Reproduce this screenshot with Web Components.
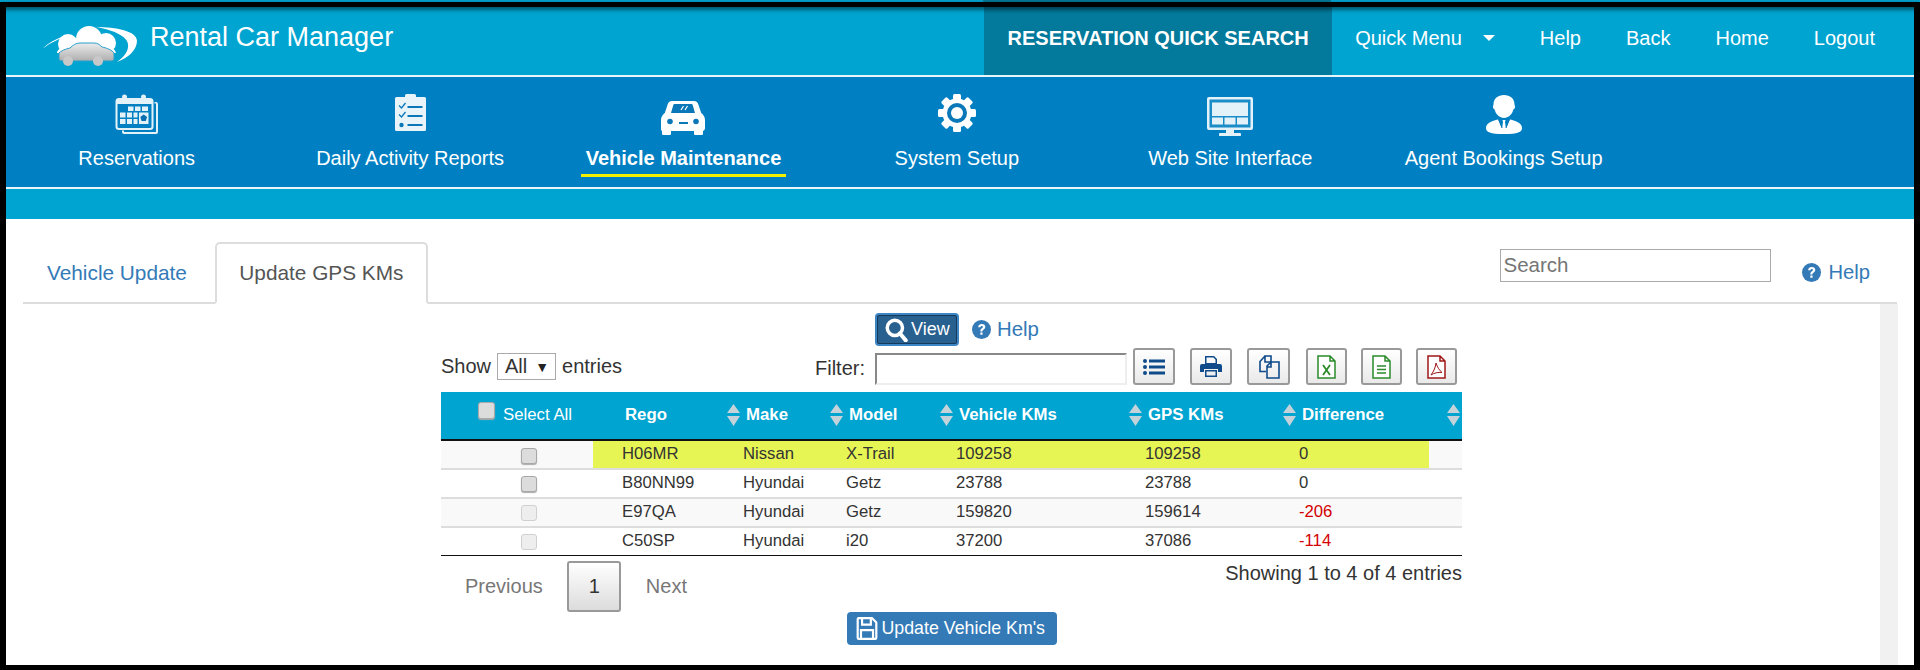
<!doctype html>
<html>
<head>
<meta charset="utf-8">
<title>Rental Car Manager</title>
<style>
  html, body { margin: 0; padding: 0; background: #fff; }
  body { font-family: "Liberation Sans", Arial, sans-serif; }
</style>
</head>
<body>
<rcm-page>
  <rcm-topbar></rcm-topbar>
  <rcm-nav>
    <rcm-nav-item icon="calendar">Reservations</rcm-nav-item>
    <rcm-nav-item icon="clipboard">Daily Activity Reports</rcm-nav-item>
    <rcm-nav-item icon="car" active>Vehicle Maintenance</rcm-nav-item>
    <rcm-nav-item icon="gear">System Setup</rcm-nav-item>
    <rcm-nav-item icon="monitor">Web Site Interface</rcm-nav-item>
    <rcm-nav-item icon="agent">Agent Bookings Setup</rcm-nav-item>
  </rcm-nav>
  <rcm-tabs></rcm-tabs>
  <rcm-gps-panel></rcm-gps-panel>
</rcm-page>

<script>
// icon artwork, keyed by name
const icons = {
  calendar: `<svg width="43" height="40" viewBox="0 0 43 40"><path d="M39.500 8H41a2 2 0 0 1 2 2v28a2 2 0 0 1-2 2H9a2 2 0 0 1-2-2v-1.500h2V38h32V9.500h-1.500z" fill="#e3f1f9"/><rect x="1.500" y="5" width="36" height="30" rx="2.500" fill="none" stroke="#e3f1f9" stroke-width="2"/><rect x="1.500" y="5" width="36" height="5" fill="#e3f1f9"/><circle cx="9.500" cy="3" r="2.500" fill="#e3f1f9"/><circle cx="28.500" cy="3" r="2.500" fill="#e3f1f9"/><g fill="#e3f1f9"><rect x="13" y="12.500" width="5.500" height="4.500"/><rect x="20" y="12.500" width="5.500" height="4.500"/><rect x="27" y="12.500" width="6" height="4.500"/><rect x="5" y="18.500" width="5.500" height="5"/><rect x="12" y="18.500" width="5" height="5"/><rect x="18.500" y="18.500" width="4" height="5"/><rect x="5" y="25" width="5.500" height="5"/><rect x="12" y="25" width="5" height="5"/><rect x="18.500" y="25" width="4" height="5"/><rect x="24" y="18.500" width="9.500" height="11.500"/></g><path d="M28.700 20.500l3.400 2.500-1.300 4h-4.200l-1.300-4z" fill="#0a6fb0"/></svg>`,
  clipboard: `<svg width="31" height="37" viewBox="0 0 31 37"><path d="M1.500 3H10V1.500A1.500 1.500 0 0 1 11.500 0h8A1.500 1.500 0 0 1 21 1.500V3h8.500A1.500 1.500 0 0 1 31 4.500v31a1.500 1.500 0 0 1-1.500 1.500h-28A1.500 1.500 0 0 1 0 35.500v-31A1.500 1.500 0 0 1 1.500 3z" fill="#e8f4fa"/><g fill="none" stroke="#0a78b8"><path d="M4 11.500l2.500 2.500 4-5M4 20.500l2.500 2.500 4-5" stroke-width="1.300"/><path d="M12.500 13h15M12.500 22h15M12.500 31h15" stroke-width="2"/></g><circle cx="6.500" cy="31" r="2.200" fill="#0a78b8"/></svg>`,
  car: `<svg style="margin-top:7px" width="44" height="34" viewBox="0 0 44 34"><path d="M11 0h22c2 0 3.500 1 4.200 3l3 9c2 1.500 3.800 4 3.800 7v8c0 1.500-1 2.500-2 3v2.500c0 1-.5 1.500-1.500 1.500h-6c-1 0-1.500-.5-1.500-1.500V30H10v2.500c0 1-.5 1.500-1.500 1.500h-6C1.500 34 1 33.500 1 32.500V30c-1-.5-1-1.500-1-3v-8c0-3 1.800-5.500 3.800-7l3-9C7.500 1 9 0 11 0z" fill="#fff"/><path d="M13.500 3h17c.6 0 1 .3 1.200.9L34 12H10l2.300-8.100c.2-.6.600-.9 1.200-.9z" fill="#0a78b8"/><path d="M20 9l2.500-4M24 9l2.500-4" stroke="#fff" stroke-width="1.200"/><circle cx="9" cy="20.500" r="2.800" fill="#0a78b8"/><circle cx="35" cy="20.500" r="2.800" fill="#0a78b8"/><rect x="18" y="21" width="9" height="2" fill="#0a78b8"/></svg>`,
  gear: `<svg width="38" height="38" viewBox="0 0 38 38"><g fill="#fff"><circle cx="19" cy="19" r="14.500"/><rect x="15" y="0" width="8" height="38" rx="1.500"/><rect x="15" y="0" width="8" height="38" rx="1.500" transform="rotate(45 19 19)"/><rect x="15" y="0" width="8" height="38" rx="1.500" transform="rotate(90 19 19)"/><rect x="15" y="0" width="8" height="38" rx="1.500" transform="rotate(135 19 19)"/></g><circle cx="19" cy="19" r="10" fill="#0a78b8"/><circle cx="19" cy="19" r="6" fill="#fff"/></svg>`,
  monitor: `<svg style="margin-top:3px" width="46" height="39" viewBox="0 0 46 39"><rect x="0" y="0" width="46" height="33" rx="2" fill="#e3f1f9"/><rect x="2.500" y="2.500" width="41" height="28" fill="#1a8cc8"/><rect x="5" y="5.500" width="36" height="13.500" fill="#e3f1f9"/><g fill="#e3f1f9"><rect x="5" y="20.500" width="11" height="7"/><rect x="17.500" y="20.500" width="11" height="7"/><rect x="30" y="20.500" width="11" height="7"/></g><path d="M19 33h8v3h6c.8 0 1 .5 1 1.500s-.2 1.500-1 1.500H13c-.8 0-1-.5-1-1.500s.2-1.500 1-1.500h6z" fill="#e3f1f9"/></svg>`,
  agent: `<svg style="margin-top:1px" width="36" height="39" viewBox="0 0 36 39"><path d="M18 0c6 0 10.500 3.500 10.500 9.500 0 1 .7 1 .5 2.800-.2 1.500-1 2-1.700 2.300C26.300 19.500 22.500 23 18 23s-8.300-3.500-9.300-8.400c-.7-.3-1.500-.8-1.700-2.300-.2-1.800.5-1.800.5-2.800C7.500 3.500 12 0 18 0z" fill="#fff"/><path d="M12 24.500C6 26 0 28 0 33c0 4 4 6 18 6s18-2 18-6c0-5-6-7-12-8.500L20 33h-4z" fill="#fff"/><path d="M16.500 25h3l-.5 2 1 7-2 2-2-2 1-7z" fill="#fff"/><path d="M13 25l3 8M23 25l-3 8" stroke="#0a78b8" stroke-width="1"/></svg>`,
  help: `<svg width="100%" height="100%" viewBox="0 0 18 18"><circle cx="9" cy="9" r="9" fill="#337ab7"/><path d="M5.800 6.800C6 4.800 7.300 3.700 9.300 3.700c2 0 3.300 1.200 3.300 2.800 0 1.300-.7 2-1.700 2.700-.8.600-1 .9-1 1.800H7.900c0-1.500.3-2.100 1.300-2.900.7-.6 1.100-.9 1.100-1.500 0-.6-.4-1-1-1-.7 0-1.100.4-1.200 1.200z" fill="#fff"/><rect x="7.900" y="11.800" width="2.100" height="2.200" fill="#fff"/></svg>`,
  search: `<svg width="23" height="24" viewBox="0 0 21 22"><circle cx="9" cy="9" r="7" fill="none" stroke="#fff" stroke-width="3.200"/><path d="M13.500 14l5.500 6.500" stroke="#fff" stroke-width="3.600" stroke-linecap="round"/></svg>`,
  list: `<svg width="22" height="18" viewBox="0 0 22 18" fill="#0f4a8a"><circle cx="2" cy="3" r="2"/><circle cx="2" cy="9" r="2"/><circle cx="2" cy="15" r="2"/><rect x="6" y="1.500" width="16" height="3"/><rect x="6" y="7.500" width="16" height="3"/><rect x="6" y="13.500" width="16" height="3"/></svg>`,
  print: `<svg width="22" height="21" viewBox="0 0 22 21" fill="#0f4a8a"><path d="M5 0h9l3 3v5H5zM6.500 1.500V7h9V3.800l-2-2.300z" fill-rule="evenodd"/><path d="M2 8h18a2 2 0 0 1 2 2v6h-4v-3H4v3H0v-6a2 2 0 0 1 2-2z"/><path d="M5 14h12v7H5zm1.500 1.500v4h9v-4z" fill-rule="evenodd"/></svg>`,
  copy: `<svg width="23" height="24" viewBox="0 0 23 24" fill="none" stroke="#0f4a8a" stroke-width="1.600"><path d="M8 1h6v6H8zM8 1L3 6.500v10h6"/><path d="M14 7h8v16H10V11zM14 7v5h-4"/></svg>`,
  xls: `<svg width="19" height="24" viewBox="0 0 19 24"><path d="M1 1h12l5 5v17H1zM13 1v5h5" fill="#fff" stroke="#2a8a2a" stroke-width="1.500"/><path d="M6 10l7 10M13 10l-7 10" stroke="#2a8a2a" stroke-width="1.800"/></svg>`,
  csv: `<svg width="19" height="24" viewBox="0 0 19 24"><path d="M1 1h12l5 5v17H1zM13 1v5h5" fill="#fff" stroke="#2a8a2a" stroke-width="1.500"/><path d="M5 11h9M5 14.500h9M5 18h9" stroke="#2a8a2a" stroke-width="1.300"/></svg>`,
  pdf: `<svg width="19" height="24" viewBox="0 0 19 24"><path d="M1 1h12l5 5v17H1zM13 1v5h5" fill="#fff" stroke="#a01818" stroke-width="1.500"/><path d="M9 8c-.5 4-2 8-5 12 3-2 7-3 11-2.500-2.500-2-4.500-5-6-9.500z" fill="none" stroke="#a01818" stroke-width="1"/></svg>`,
  save: `<svg width="22" height="23" viewBox="0 0 19 21" fill="none" stroke="#fff" stroke-width="2"><path d="M1 2a1 1 0 0 1 1-1h12l4 4v14a1 1 0 0 1-1 1H2a1 1 0 0 1-1-1z"/><path d="M5 1v6h8V1M4 20v-8h11v8"/></svg>`,
};

const LOGO = `<svg width="95" height="41" viewBox="0 0 95 41">
  <defs><linearGradient id="car" x1="0" y1="0" x2="0" y2="1"><stop offset="0" stop-color="#ececec"/><stop offset="1" stop-color="#aeaeae"/></linearGradient></defs>
  <path d="M0 22.500C7 15 17 11 28 8.500 18 12 8 16 0 22.500z" fill="#fff"/>
  <path d="M53 1C73 1 94 5 94 15c0 9-9 17-20 21 7-5 12-11 11-18C84 10 70 4 53 1z" fill="#fff"/>
  <circle cx="25" cy="18" r="10" fill="#fff"/><circle cx="46" cy="13" r="13" fill="#fff"/><circle cx="63" cy="17" r="10" fill="#fff"/>
  <path d="M14 27c0-3 3-5 8-6l40-1c6 1 10 3 11 7z" fill="#fff"/>
  <path d="M16 27c2-2 6-4 11-5 3-3 6-5 10-5h14c4 0 6 2 8 4 5 1 10 3 12 6v6c0 1-1 2-3 2H19c-2 0-3-1-3-2z" fill="url(#car)" stroke="#2a9fcc" stroke-width="1"/>
  <circle cx="25" cy="35" r="5" fill="#c8c8c8"/><circle cx="55" cy="35" r="5" fill="#c8c8c8"/>
</svg>`;

class RcmPage extends HTMLElement {
  constructor() {
    super();
    this.attachShadow({ mode: "open" }).innerHTML = `
      <style>
        :host { display: block; height: 670px; box-sizing: border-box; overflow: hidden;
          font-family: "Liberation Sans", Arial, sans-serif; }
        .frame { box-sizing: border-box; height: 670px; display: flex; flex-direction: column;
          border-left: 6px solid #000; border-right: 6px solid #000; border-bottom: 5px solid #000;
          background: #fff; }
        .edge { height: 2px; margin: 0 -6px; flex: none;
          background: linear-gradient(to right, #00a4d1 983px, #03799b 983px, #03799b 1331px, #00a4d1 1331px); }
        .black { height: 5px; margin: 0 -6px; background: #000; flex: none; position: relative; z-index: 2;
          box-shadow: 0 2px 5px rgba(0,0,0,.65); }
      </style>
      <div class="frame">
        <div class="edge"></div>
        <div class="black"></div>
        <slot></slot>
      </div>`;
  }
}
customElements.define("rcm-page", RcmPage);

// top bar with logo, quick search and links
class RcmTopbar extends HTMLElement {
  constructor() {
    super();
    this.attachShadow({ mode: "open" }).innerHTML = `
      <style>
        :host { display: flex; flex: none; height: 68px; background: #00a4d1; color: #fff;
          border-bottom: 2px solid #e6f6fb; font-size: 20px; }
        .logo { display: flex; align-items: center; margin-left: 37px; }
        .brand { font-size: 27px; margin-left: 12px; align-self: center; margin-top: -8px; }
        .logo svg { margin-top: 11px; display: block; }
        .quick { margin-left: auto; width: 348px; background: #03799b; display: flex; align-items: center;
          justify-content: center; font-weight: bold; padding-bottom: 6px; box-sizing: border-box; }
        nav { display: flex; align-items: center; padding: 0 39px 6px 23px; gap: 45px; }
        .menu { display: flex; align-items: center; gap: 21px; }
        .caret { width: 0; height: 0; border: 6px solid transparent; border-top: 6px solid #fff; border-bottom: 0; }
      </style>
      <div class="logo">${LOGO}</div>
      <div class="brand">Rental Car Manager</div>
      <div class="quick">RESERVATION QUICK SEARCH</div>
      <nav>
        <span class="menu">Quick Menu<i class="caret"></i></span>
        <span>Help</span><span>Back</span><span>Home</span><span>Logout</span>
      </nav>`;
  }
}
customElements.define("rcm-topbar", RcmTopbar);

class RcmNav extends HTMLElement {
  constructor() {
    super();
    this.attachShadow({ mode: "open" }).innerHTML = `
      <style>
        :host { display: block; flex: none; background: #0080c2; height: 110px; border-bottom: 2px solid #e6f6fb; }
        .row { display: grid; grid-template-columns: repeat(6, 273.4px); margin-left: -6px; }
      </style>
      <div class="row"><slot></slot></div>`;
  }
  connectedCallback() {
    if (!this.nextElementSibling || this.nextElementSibling.tagName !== "RCM-STRIP") {
      this.after(document.createElement("rcm-strip"));
    }
  }
}
customElements.define("rcm-nav", RcmNav);

class RcmStrip extends HTMLElement {
  constructor() {
    super();
    this.attachShadow({ mode: "open" }).innerHTML = `<style>:host { display: block; flex: none; height: 30px; background: #00a4d1; }</style>`;
  }
}
customElements.define("rcm-strip", RcmStrip);

class RcmNavItem extends HTMLElement {
  constructor() {
    super();
    this.attachShadow({ mode: "open" }).innerHTML = `
      <style>
        :host { display: flex; flex-direction: column; align-items: center; padding-top: 17px; color: #fff; font-size: 20px; }
        .icon { height: 40px; display: flex; align-items: flex-start; }
        .label { margin-top: 13px; line-height: 22px; padding: 0 4.500px 5px; border-bottom: 3px solid transparent; }
        :host([active]) .label { font-weight: bold; border-bottom-color: #f2f200; }
      </style>
      <div class="icon"></div>
      <div class="label"><slot></slot></div>`;
  }
  connectedCallback() {
    this.shadowRoot.querySelector(".icon").innerHTML = icons[this.getAttribute("icon")] || "";
  }
}
customElements.define("rcm-nav-item", RcmNavItem);

class RcmTabs extends HTMLElement {
  constructor() {
    super();
    this.attachShadow({ mode: "open" }).innerHTML = `
      <style>
        :host { display: flex; flex: none; height: 60px; margin: 23px 17px 0; border-bottom: 2px solid #ddd;
          font-size: 20.800px; color: #337ab7; }
        .tab { display: flex; align-items: center; box-sizing: border-box; height: 62px; padding: 0 24px; }
        .active { margin-left: 4px; width: 213px; padding: 0; justify-content: center; color: #555; background: #fff;
          border: 2px solid #ddd; border-bottom-color: #fff; border-radius: 5px 5px 0 0; }
        input { all: unset; box-sizing: border-box; width: 271px; height: 33px; margin: 7px 0 0 auto; padding: 0 2px 2px;
          border: 1px solid #aaa; font: 20.500px "Liberation Sans", Arial, sans-serif; color: #333; }
        input::placeholder { color: #757575; }
        .help { display: flex; align-items: center; gap: 7px; margin: 0 27px 0 31px; font-size: 20.200px; }
        .help i { width: 19px; height: 19px; display: block; }
      </style>
      <div class="tab">Vehicle Update</div>
      <div class="tab active">Update GPS KMs</div>
      <input placeholder="Search">
      <div class="help"><i>${icons.help}</i>Help</div>`;
  }
}
customElements.define("rcm-tabs", RcmTabs);

const ARROWS = `<svg width="13" height="22" viewBox="0 0 13 22" fill="#c4d2da"><path d="M6.500 0L13 9H0zM0 12h13l-6.500 10z"/></svg>`;
const ROWS = [
  ["H06MR", "Nissan", "X-Trail", "109258", "109258", "0"],
  ["B80NN99", "Hyundai", "Getz", "23788", "23788", "0"],
  ["E97QA", "Hyundai", "Getz", "159820", "159614", "-206"],
  ["C50SP", "Hyundai", "i20", "37200", "37086", "-114"],
];

class RcmGpsPanel extends HTMLElement {
  constructor() {
    super();
    const head = ["Make", "Model", "Vehicle KMs", "GPS KMs", "Difference"]
      .map((t) => `<th><div class="sort">${ARROWS}<span>${t}</span></div></th>`).join("");
    const body = ROWS.map((r, i) => `
      <tr class="${i % 2 ? "even" : "odd"} ${i === 0 ? "hl" : ""} ${i > 1 ? "off" : ""}">
        <td class="chk"><input type="checkbox"></td>
        ${r.map((c, j) => `<td class="${j === 5 && c[0] === "-" ? "neg" : ""}">${c}</td>`).join("")}
        <td class="end"></td>
      </tr>`).join("");
    this.attachShadow({ mode: "open" }).innerHTML = `
      <style>
        :host { display: flex; flex: 1; min-height: 0; color: #333; font-size: 20px; }
        .main { flex: none; width: 1021px; margin-left: 435px; }
        .bar { margin-left: auto; margin-right: 16px; width: 18px; background: #f1f1f1; }
        .view-row { display: flex; align-items: center; gap: 13px; padding: 9px 0 0 434px; }
        .view { display: flex; align-items: center; gap: 3px; box-sizing: border-box; width: 84px; height: 33px; padding-left: 8px;
          background: #286090; color: #fff; border-radius: 4px; border: 2px solid #3d86c6; outline: 1px solid #16395a; outline-offset: -3px; font-size: 18px; }
        .help { display: flex; align-items: center; gap: 6px; color: #337ab7; font-size: 20.400px; }
        .help i { width: 19px; height: 19px; display: block; }
        .tools { display: flex; align-items: center; height: 37px; margin: 2px 0 7px; padding-right: 5px; }
        .show { display: flex; align-items: center; gap: 6px; }
        .sel { display: flex; align-items: center; justify-content: space-between; box-sizing: border-box; width: 59px; height: 27px;
          padding: 0 6px 0 7px; border: 1px solid #aaa; }
        .sel b { font-size: 14px; font-weight: normal; color: #222; }
        .filter { margin-left: auto; margin-top: 4px; }
        .box { box-sizing: border-box; width: 252px; height: 32px; margin: 4px 0 0 10px; border: 2px solid; border-color: #888 #eee #eee #888; }
        .btn { box-sizing: border-box; width: 41px; height: 37px; margin-left: 14px; display: flex; align-items: center; justify-content: center;
          border: 2px solid #999; border-radius: 3px; background: linear-gradient(#fff, #e9e9e9); }
        .btn.list { width: 42px; margin-left: 6px; }
        .btn.print { width: 42px; margin-left: 15px; }
        .btn.copy { width: 43px; margin-left: 15px; }
        .btn.xls { margin-left: 16px; }
        table { border-collapse: separate; border-spacing: 0; table-layout: fixed; width: 1021px; font-size: 16.700px; }
        th { padding: 0 0 2px; box-sizing: border-box; background: #00a4d1; color: #fff; border-bottom: 2px solid #111;
          text-align: left; font-size: 16.800px; height: 49px; }
        .sort { display: flex; align-items: center; gap: 6px; padding-left: 13px; }
        .rego { padding-left: 32px; }
        .all { display: flex; align-items: center; gap: 8px; padding-left: 37px; font-weight: normal; }
        td { height: 27px; padding: 0 0 0 29px; line-height: 25px; vertical-align: top; border-top: 2px solid #ddd; color: #333; }
        tr:first-child td { border-top: 0; }
        tr:last-child td { border-bottom: 1px solid #111; }
        .odd td { background: #f9f9f9; }
        .even td { background: #fff; }
        .hl td:not(.chk):not(.end) { background: #e6f553; }
        td.chk { padding: 0; }
        td.end { padding: 0; }
        td.neg { color: #d40000; }
        input[type=checkbox] { appearance: none; display: block; box-sizing: border-box; width: 16px; height: 16px; margin: 6px 0 0 80px;
          background: #dcdcdc; border: 1px solid #a8a8a8; border-radius: 3px; box-shadow: 0 1px 1px #aaa; flex: none; }
        tr:first-child td.chk input { margin-top: 7px; }
        th input[type=checkbox] { width: 17px; height: 17px; margin: -9px 0 0; }
        .off input[type=checkbox] { background: #eee; border-color: #d0d0d0; box-shadow: none; }
        .foot { display: flex; height: 51px; margin-top: 5px; }
        .pager { display: flex; align-items: center; margin-left: 24px; color: #777; }
        .cur { box-sizing: border-box; width: 54px; height: 51px; margin: 0 24.500px; display: flex; align-items: center; justify-content: center;
          color: #333; border: 2px solid #999; border-radius: 3px; background: linear-gradient(#fff, #dcdcdc); }
        .info { margin-left: auto; line-height: 22px; padding-top: 1px; }
        .save { display: flex; align-items: center; gap: 4px; box-sizing: border-box; width: 210px; height: 33px; margin: 0 auto; padding-left: 9px;
          background: #337ab7; color: #fff; border-radius: 4px; font-size: 17.800px; }
      </style>
      <div class="main">
        <div class="view-row">
          <div class="view">${icons.search}<span>View</span></div>
          <div class="help"><i>${icons.help}</i>Help</div>
        </div>
        <div class="tools">
          <div class="show">Show <span class="sel">All<b>▼</b></span> entries</div>
          <span class="filter">Filter:</span><div class="box"></div>
          <div class="btn list">${icons.list}</div>
          <div class="btn print">${icons.print}</div>
          <div class="btn copy">${icons.copy}</div>
          <div class="btn xls">${icons.xls}</div>
          <div class="btn">${icons.csv}</div>
          <div class="btn">${icons.pdf}</div>
        </div>
        <table>
          <colgroup><col style="width:152px"><col style="width:121px"><col style="width:103px"><col style="width:110px"><col style="width:189px"><col style="width:154px"><col style="width:159px"><col style="width:33px"></colgroup>
          <thead><tr>
            <th><div class="all"><input type="checkbox"><span>Select All</span></div></th>
            <th><div class="rego">Rego</div></th>
            ${head}
            <th><div class="sort" style="padding-left:18px">${ARROWS}</div></th>
          </tr></thead>
          <tbody>${body}</tbody>
        </table>
        <div class="foot">
          <div class="pager"><span>Previous</span><span class="cur">1</span><span>Next</span></div>
          <div class="info">Showing 1 to 4 of 4 entries</div>
        </div>
        <div class="save">${icons.save}<span>Update Vehicle Km's</span></div>
      </div>
      <div class="bar"></div>`;
  }
}
customElements.define("rcm-gps-panel", RcmGpsPanel);
</script>
</body>
</html>
